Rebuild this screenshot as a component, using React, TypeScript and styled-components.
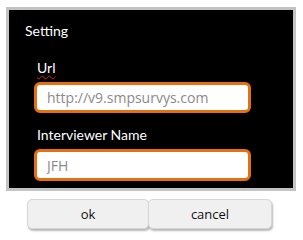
import React from "react";
import styled, { createGlobalStyle } from "styled-components";

const GlobalStyle = createGlobalStyle`
  body {
    margin: 0;
    background: #ffffff;
    font-family: Lato, "Open Sans", sans-serif;
  }
`;

const Page = styled.div`
  width: 303px;
  height: 240px;
  padding: 7px 0 0 6px;
  box-sizing: border-box;
`;

const Panel = styled.div`
  width: 290px;
  height: 184px;
  box-sizing: border-box;
  border: 3px solid #c3c3c3;
  background: #000;
  padding: 12px 0 0 16px;
  display: flex;
  flex-direction: column;
`;

const Title = styled.div`
  color: #fff;
  font-size: 14px;
  line-height: 17px;
`;

const Field = styled.div<{ $top: number }>`
  display: flex;
  flex-direction: column;
  margin-top: ${(p) => p.$top}px;
  padding-left: 9px;
`;

const Label = styled.label<{ $misspelled?: boolean }>`
  color: #fff;
  font-size: 14px;
  line-height: 17px;
  padding-left: 3px;
  margin-bottom: 6px;
  text-decoration: ${(p) => (p.$misspelled ? "underline wavy #e02020" : "none")};
  text-decoration-thickness: 1px;
  text-underline-offset: 2px;
`;

const Input = styled.input<{ $h: number }>`
  width: 217px;
  height: ${(p) => p.$h}px;
  box-sizing: border-box;
  border: 3px solid #e4700f;
  border-radius: 6px;
  background: #fff;
  padding: 0 10px;
  font-family: "Open Sans", sans-serif;
  font-size: 14px;
  outline: none;
  &::placeholder {
    color: #8a8a8a;
  }
`;

const ButtonRow = styled.div`
  display: flex;
  margin: 8px 0 0 21px;
`;

const Button = styled.button<{ $w: number }>`
  width: ${(p) => p.$w}px;
  height: 30px;
  margin-right: -1px;
  box-sizing: border-box;
  border: 1px solid #d6d6d6;
  border-radius: 5px;
  background: #f0f0f0;
  box-shadow: 1px 2px 2px rgba(0, 0, 0, 0.28);
  font-family: "Open Sans", sans-serif;
  font-size: 13px;
  color: #111;
`;

export default function App() {
  return (
    <Page>
      <GlobalStyle />
      <Panel>
        <Title>Setting</Title>
        <Field $top={20}>
          <Label $misspelled>Url</Label>
          <Input $h={31} placeholder="http://v9.smpsurvys.com" />
        </Field>
        <Field $top={13}>
          <Label>Interviewer Name</Label>
          <Input $h={32} placeholder="JFH" />
        </Field>
      </Panel>
      <ButtonRow>
        <Button $w={122}>ok</Button>
        <Button $w={124}>cancel</Button>
      </ButtonRow>
    </Page>
  );
}
